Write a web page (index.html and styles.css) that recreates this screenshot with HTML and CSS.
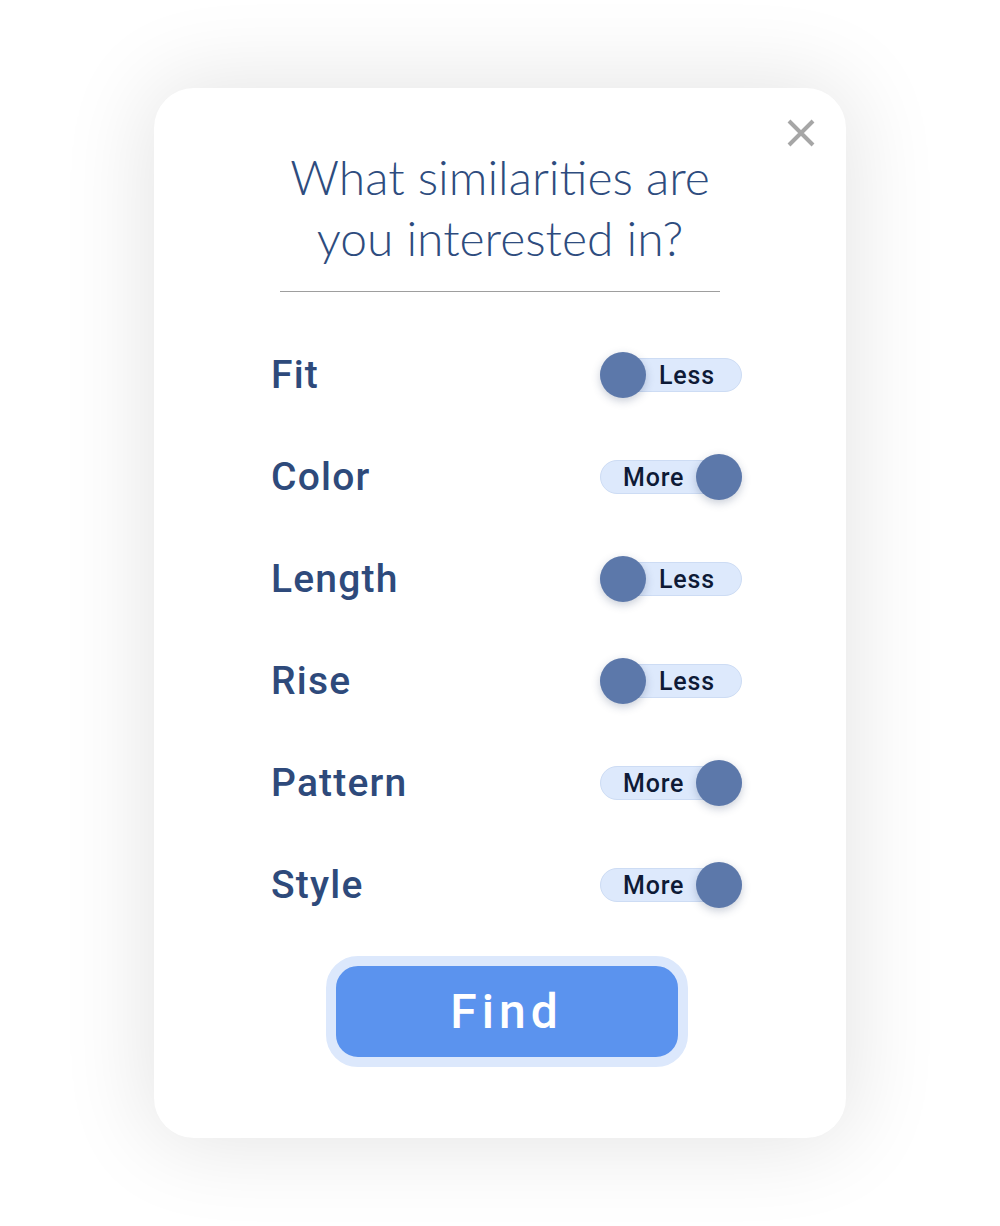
FILE: index.html
```html
<!DOCTYPE html>
<html lang="en">
<head>
  <meta charset="UTF-8">
  <title>Similar items</title>
  <link rel="stylesheet" href="styles.css">
</head>
<body>

<div class="card">
  <button class="close" aria-label="Close">
    <svg width="28" height="28" viewBox="0 0 28 28">
      <path d="M2 2 L26 26 M26 2 L2 26" stroke="#a6a6a6" stroke-width="4" fill="none"/>
    </svg>
  </button>

  <h1 class="title">What similarities are<br>you interested in?</h1>
  <div class="divider"></div>

  <div class="options">
    <div class="row">
      <span class="label">Fit</span>
      <div class="toggle less"><span class="knob"></span><span class="state">Less</span></div>
    </div>
    <div class="row">
      <span class="label">Color</span>
      <div class="toggle more"><span class="state">More</span><span class="knob"></span></div>
    </div>
    <div class="row">
      <span class="label">Length</span>
      <div class="toggle less"><span class="knob"></span><span class="state">Less</span></div>
    </div>
    <div class="row">
      <span class="label">Rise</span>
      <div class="toggle less"><span class="knob"></span><span class="state">Less</span></div>
    </div>
    <div class="row">
      <span class="label">Pattern</span>
      <div class="toggle more"><span class="state">More</span><span class="knob"></span></div>
    </div>
    <div class="row">
      <span class="label">Style</span>
      <div class="toggle more"><span class="state">More</span><span class="knob"></span></div>
    </div>

    <div class="actions">
      <button class="find">Find</button>
    </div>
  </div>
</div>

</body>
</html>
```

FILE: styles.css
```css
body {
  margin: 0;
  min-height: 100vh;
  background-color: #ffffff;
  display: flex;
  align-items: center;
  justify-content: center;
  font-family: Roboto, "Open Sans", sans-serif;
}
.card {
  position: relative;
  box-sizing: border-box;
  width: 692px;
  height: 1050px;
  padding: 58px 0 0 0;
  background-color: #ffffff;
  border-radius: 40px;
  box-shadow: 0 0 90px 6px rgba(0, 0, 0, 0.11);
}
.close {
  position: absolute;
  top: 31px;
  right: 31px;
  padding: 0;
  border: none;
  background: none;
  line-height: 0;
}
.title {
  margin: 0;
  text-align: center;
  font-family: Lato, "Open Sans", sans-serif;
  font-size: 48px;
  font-weight: 300;
  line-height: 61px;
  color: #2e4c7e;
}
.divider {
  width: 440px;
  margin: 23px auto 0 auto;
  border-top: 1.5px solid #9e9e9e;
}
.options {
  margin-top: 32px;
  padding: 0 104px 0 117px;
}
.row {
  height: 102px;
  display: flex;
  align-items: center;
  justify-content: space-between;
}
.label {
  font-size: 39px;
  font-weight: 500;
  letter-spacing: 1.2px;
  color: #2e4a7b;
}
.toggle {
  box-sizing: border-box;
  width: 142px;
  height: 34px;
  display: flex;
  align-items: center;
  border-radius: 17px;
  background-color: #dde9fc;
  border: 1px solid #cddcf4;
}
.knob {
  flex: none;
  width: 46px;
  height: 46px;
  border-radius: 50%;
  background-color: #5c78aa;
  box-shadow: 0 3px 8px rgba(40, 60, 100, 0.25);
}
.less .knob {
  margin-left: -1px;
}
.more .knob {
  margin-left: auto;
  margin-right: -1px;
}
.state {
  font-size: 25px;
  font-weight: 500;
  letter-spacing: 0.8px;
  color: #0e1a36;
}
.less .state {
  margin-left: 13px;
}
.more .state {
  margin-left: 22px;
}
.actions {
  margin-top: 20px;
  display: flex;
  justify-content: center;
}
.find {
  box-sizing: border-box;
  width: 362px;
  height: 111px;
  border: 10px solid #dce8fc;
  border-radius: 32px;
  background-color: #5b93ee;
  color: #ffffff;
  font-family: Roboto, "Open Sans", sans-serif;
  font-size: 48px;
  font-weight: 500;
  letter-spacing: 5px;
}
```
